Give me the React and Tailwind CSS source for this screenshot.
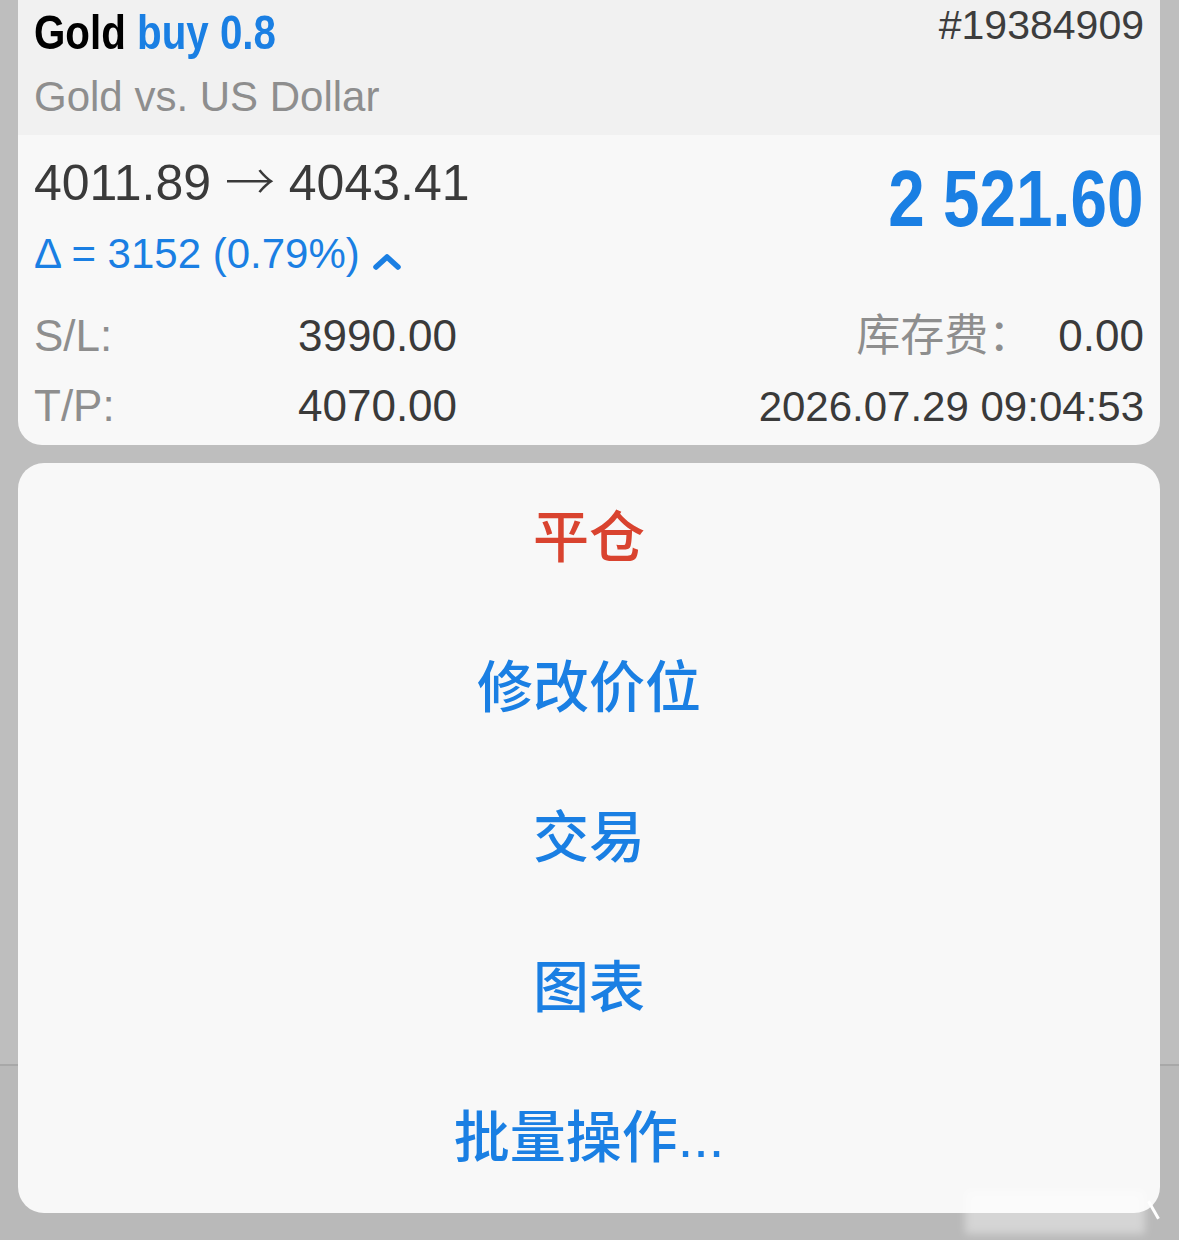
import React from 'react'

const menuItems = [
  { label: '平仓', danger: true },
  { label: '修改价位' },
  { label: '交易' },
  { label: '图表' },
  { label: '批量操作...' },
]

function ChevronUp() {
  return (
    <svg width="30" height="20" viewBox="0 0 30 20" className="ml-[12px] mb-[4px]">
      <polyline points="4,16 15,6 26,16" fill="none" stroke="#1a7fe3" strokeWidth="5.5" strokeLinecap="round" strokeLinejoin="round" />
    </svg>
  )
}

function PositionCard() {
  return (
    <div className="rounded-b-[24px] overflow-hidden">
      <div className="bg-[#f1f1f1] h-[135px] px-4 pt-[5px] flex justify-between items-start">
        <div className="pt-[4px]">
          <div className="inline-block origin-left scale-x-[0.84] font-bold text-[48px] leading-none whitespace-nowrap">
            <span className="text-black">Gold</span>
            <span className="text-[#1a7fe3]"> buy 0.8</span>
          </div>
          <div className="mt-[19px] text-[42px] leading-none text-[#8e8e8e]">Gold vs. US Dollar</div>
        </div>
        <div className="text-[41px] leading-none text-[#3d3d3d]">#19384909</div>
      </div>

      <div className="bg-[#f8f8f8] h-[310px] px-4">
        <div className="flex justify-between items-start">
          <div className="pt-[18px]">
            <div className="h-[50px] text-[50px] leading-none text-[#3a3a3a] whitespace-nowrap">
              4011.89 <span className="font-['Noto_Sans_CJK_SC',sans-serif] font-light">→</span> 4043.41
            </div>
            <div className="mt-[30px] flex items-end text-[42px] leading-none text-[#1a7fe3]">
              <span>Δ = 3152 (0.79%)</span>
              <ChevronUp />
            </div>
          </div>
          <div className="pt-[24px] inline-block origin-right scale-x-[0.83] font-bold text-[79px] leading-none text-[#1a7fe3] whitespace-nowrap">
            2 521.60
          </div>
        </div>

        <div className="mt-[39px] flex justify-between items-start text-[44px] leading-none">
          <div className="flex">
            <span className="w-[264px] text-[#8e8e8e]">S/L:</span>
            <span className="text-[#3a3a3a]">3990.00</span>
          </div>
          <div className="flex gap-[26px]">
            <span className="text-[#8e8e8e]">库存费：</span>
            <span className="text-[#3a3a3a]">0.00</span>
          </div>
        </div>
        <div className="mt-[26px] flex justify-between items-start leading-none">
          <div className="flex text-[44px]">
            <span className="w-[264px] text-[#8e8e8e]">T/P:</span>
            <span className="text-[#3a3a3a]">4070.00</span>
          </div>
          <span className="text-[42px] text-[#3a3a3a] pt-[2px]">2026.07.29 09:04:53</span>
        </div>
      </div>
    </div>
  )
}

function ActionSheet() {
  return (
    <div className="mt-[18px] bg-[#f8f8f8] rounded-[26px] flex flex-col">
      {menuItems.map(item => (
        <button
          key={item.label}
          className={`h-[150px] flex items-center justify-center text-[56px] font-medium ${item.danger ? 'text-[#d9432f]' : 'text-[#1a7fe3]'}`}
        >
          {item.label}
        </button>
      ))}
    </div>
  )
}

export default function App() {
  return (
    <div className="relative min-h-[1240px] overflow-hidden font-['Liberation_Sans','Noto_Sans_CJK_SC',sans-serif] bg-[linear-gradient(to_bottom,#bebebe_0,#bebebe_1064px,#a8a8a8_1064px,#a8a8a8_1066px,#b9b9b9_1066px)]">
      <div className="px-[18px] pr-[19px]">
        <PositionCard />
        <ActionSheet />
      </div>
      {/* faded corner mark over the sheet */}
      <div className="absolute left-[965px] top-[1190px] w-[180px] h-[44px] bg-white/40 blur-[4px]" />
      <div className="absolute left-[1152px] top-[1200px] w-[3px] h-[20px] bg-white rotate-[-30deg]" />
    </div>
  )
}
